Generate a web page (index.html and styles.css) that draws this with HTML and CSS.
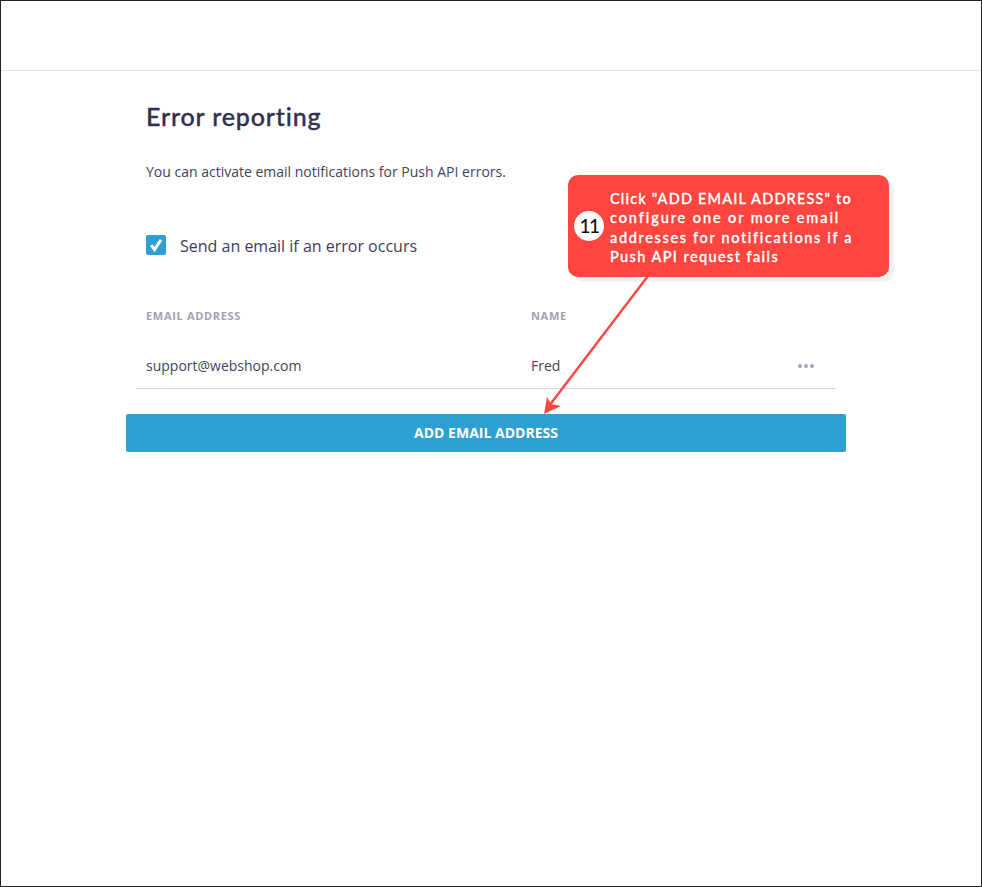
FILE: index.html
```html
<!DOCTYPE html>
<html lang="en">
<head>
<meta charset="utf-8">
<title>Error reporting</title>
<link rel="stylesheet" href="styles.css">
</head>
<body>
<div class="frame">
  <header class="topbar"></header>
  <main class="content">
    <section class="section">
      <h1 class="title">Error reporting</h1>
      <p class="intro">You can activate email notifications for Push API errors.</p>
      <label class="check-row">
        <span class="checkbox">
          <svg width="20" height="20" viewBox="0 0 20 20"><path d="M5.2 10.2 8.6 14.6 15 4.8" fill="none" stroke="#fff" stroke-width="3"/></svg>
        </span>
        <span class="check-label">Send an email if an error occurs</span>
      </label>
    </section>
    <div class="table">
      <div class="row head">
        <span class="col-email">EMAIL ADDRESS</span>
        <span class="col-name">NAME</span>
      </div>
      <div class="row body-row">
        <span class="col-email">support@webshop.com</span>
        <span class="col-name">Fred</span>
        <svg class="more" width="18" height="6" viewBox="0 0 18 6"><circle cx="3" cy="3" r="2" fill="#a5a3b8"/><circle cx="9" cy="3" r="2" fill="#a5a3b8"/><circle cx="15" cy="3" r="2" fill="#a5a3b8"/></svg>
      </div>
    </div>
    <button class="add-btn" type="button">ADD EMAIL ADDRESS</button>
  </main>
  <aside class="callout">
    <span class="badge">11</span>
    <p class="callout-text"><span class="line line-1">Click "ADD EMAIL ADDRESS" to</span> <span class="line line-2">configure one or more email</span> <span class="line line-3">addresses for notifications if a</span> <span class="line line-4">Push API request fails</span></p>
  </aside>
  <svg class="arrow" width="982" height="887" viewBox="0 0 982 887">
    <line x1="648" y1="276" x2="549" y2="406" stroke="#ff4540" stroke-width="2.4"/>
    <path d="M544 414 547 397 551 404 561 406Z" fill="#ff4540"/>
  </svg>
</div>
</body>
</html>
```
FILE: styles.css
```css
* { box-sizing: border-box; }
html, body { margin: 0; padding: 0; background: #fff; }
body { font-family: "Open Sans", "Liberation Sans", sans-serif; color: #3a3654; }
.frame {
  position: relative;
  width: 982px;
  height: 887px;
  border: 1px solid #222;
  overflow: hidden;
}
.topbar { height: 70px; border-bottom: 1px solid #e2e2e2; }
.content { width: 720px; margin-left: 125px; }
.section { padding: 0 20px; }
.title {
  margin: 28px 0 0;
  font-family: Lato, "Open Sans", sans-serif;
  font-size: 25px;
  line-height: 34px;
  font-weight: 500;
  letter-spacing: 0.85px;
  color: #33304e;
  -webkit-text-stroke: 0.35px #33304e;
}
.intro { margin: 29px 0 0; font-size: 14px; line-height: 20px; color: #45425c; }
.check-row { display: flex; align-items: center; gap: 14px; margin-top: 54px; height: 20px; }
.checkbox { width: 20px; height: 20px; border-radius: 2px; background: #2d9fd2; display: block; margin-top: -2px; }
.checkbox svg { display: block; }
.check-label { font-size: 16px; line-height: 20px; color: #3f3b5b; }
.table { margin: 0 10px; }
.row { display: flex; align-items: center; padding-left: 10px; position: relative; }
.col-email { width: 385px; }
.head { margin-top: 49px; height: 20px; font-size: 11px; font-weight: 700; letter-spacing: 0.68px; color: #a2a1b3; }
.body-row { margin-top: 19px; height: 45px; padding-bottom: 1px; font-size: 14px; color: #45425c; border-bottom: 1px solid #d5d4dc; }
.more { margin-left: auto; margin-right: 21px; }
.add-btn {
  display: block;
  width: 720px;
  height: 38px;
  margin-top: 25px;
  padding: 0 0 1px;
  border: 0;
  border-radius: 2px;
  background: #2d9fd2;
  color: #fff;
  font-family: "Open Sans", "Liberation Sans", sans-serif;
  font-size: 14px;
  font-weight: 700;
}
.callout {
  position: absolute;
  left: 567px;
  top: 174px;
  width: 321px;
  height: 102px;
  display: flex;
  align-items: center;
  padding: 0 20px 0 6px;
  border-radius: 10px;
  background: #ff4540;
  box-shadow: 5px 5px 0 #f2f2f2;
  color: #fff;
}
.badge {
  flex: none;
  width: 30px;
  height: 30px;
  border-radius: 50%;
  background: #fff;
  color: #111;
  font-family: Lato, sans-serif;
  font-size: 19px;
  font-weight: 500;
  letter-spacing: -1.5px;
  line-height: 30px;
  text-align: center;
}
.callout-text {
  margin: 3px 0 0 6px;
  font-family: Lato, sans-serif;
  font-size: 14.5px;
  font-weight: 500;
  line-height: 19.5px;
  -webkit-text-stroke: 0.3px #fff;
}
.line { display: block; white-space: nowrap; }
.line-1 { letter-spacing: 1.18px; }
.line-2 { letter-spacing: 1.9px; }
.line-3 { letter-spacing: 1.65px; }
.line-4 { letter-spacing: 1.4px; }
.arrow { position: absolute; left: -1px; top: -1px; pointer-events: none; }
```
